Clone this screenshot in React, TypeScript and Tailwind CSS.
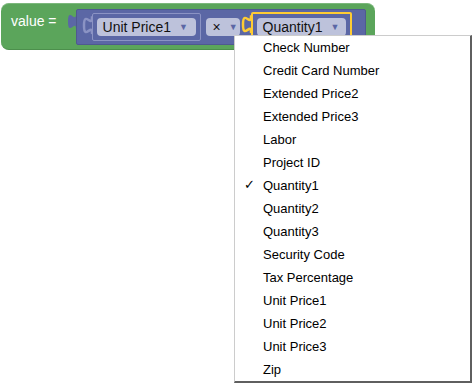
import React from "react";

const PURPLE = "#5b67a5";

function Tab({ fill, stroke, h = 20 }: { fill: string; stroke?: string; h?: number }) {
  return (
    <svg width="9" height={h} viewBox={`0 0 9 ${h}`} className="shrink-0 -mr-[1px] self-start" style={{ overflow: "visible" }}>
      <path d="M9,5 L8,5 C8,15 0,-3 0,12.5 S8,10 8,20 L9,20 Z" fill={fill} />
      {stroke ? (
        <path d="M9,4.5 L8,4.5 C8,15 0,-3 0,12.5 S8,10 8,20 L9,20.5" fill="none" stroke={stroke} strokeWidth="2.5" />
      ) : null}
    </svg>
  );
}

function Pill({ label, className = "" }: { label: string; className?: string }) {
  return (
    <div
      className={`flex items-center h-[18px] rounded-[4px] bg-[#bdc2db] pl-[6px] pr-[7px] text-[14px] leading-[18px] text-[#111] ${className}`}
    >
      <span>{label}</span>
      <span className="ml-[8px] text-[9px] text-[#5b67a5] leading-none">▼</span>
    </div>
  );
}

const items = [
  "Check Number",
  "Credit Card Number",
  "Extended Price2",
  "Extended Price3",
  "Labor",
  "Project ID",
  "Quantity1",
  "Quantity2",
  "Quantity3",
  "Security Code",
  "Tax Percentage",
  "Unit Price1",
  "Unit Price2",
  "Unit Price3",
  "Zip",
];

export default function App() {
  return (
    <div
      className="relative w-[473px] h-[383px] bg-white overflow-hidden"
      style={{ fontFamily: '"Liberation Sans", Arial, sans-serif' }}
    >
      <div className="pt-[3px] pl-[1px]">
        <div className="flex items-start w-[374px] h-[47px] rounded-[8px] bg-[#5ba55b] border-t border-[#7cb87c] border-b border-b-[#4c8f4c]">
          <div className="mt-[9px] ml-[10px] text-white text-[14px] leading-[16px] whitespace-nowrap">value =</div>
          <div className="flex items-start ml-[11px] mt-[5px]">
            <div className="mt-[0px]">
              <Tab fill={PURPLE} />
            </div>
            <div className="flex items-center h-[36px] w-[290px] bg-[#5b67a5] border border-[#4f5990] rounded-[2px] pl-[7px]">
              <div className="flex items-start">
                <Tab fill={PURPLE} stroke="#8b93c4" h={20} />
                <div className="flex items-center h-[28px] px-[4px] bg-[#5b67a5] border border-[#8b93c4] rounded-[2px]">
                  <Pill label="Unit Price1" className="w-[99px]" />
                </div>
              </div>
              <Pill label="×" className="ml-[5px] w-[34px] pl-[7px]" />
              <div className="flex items-start ml-[3px]">
                <Tab fill={PURPLE} stroke="#ffcc33" h={20} />
                <div className="flex items-center h-[30px] px-[4px] bg-[#5b67a5] border-[2.5px] border-[#ffcc33] rounded-[2px]">
                  <Pill label="Quantity1" className="w-[89px]" />
                </div>
              </div>
            </div>
          </div>
        </div>
      </div>

      <div className="absolute left-[234px] top-[35px] w-[238px] h-[348px] bg-white border-l border-t border-[#cccccc] border-r-2 border-b-2 border-r-[#5f5f5f] border-b-[#5f5f5f]">
        {items.map((it) => (
          <div key={it} className="relative h-[23px] flex items-center pl-[28px] text-[13px] text-black whitespace-nowrap">
            {it === "Quantity1" ? (
              <span className="absolute left-[9px] top-[3px] text-[13px] leading-[16px]">✓</span>
            ) : null}
            {it}
          </div>
        ))}
      </div>
    </div>
  );
}
